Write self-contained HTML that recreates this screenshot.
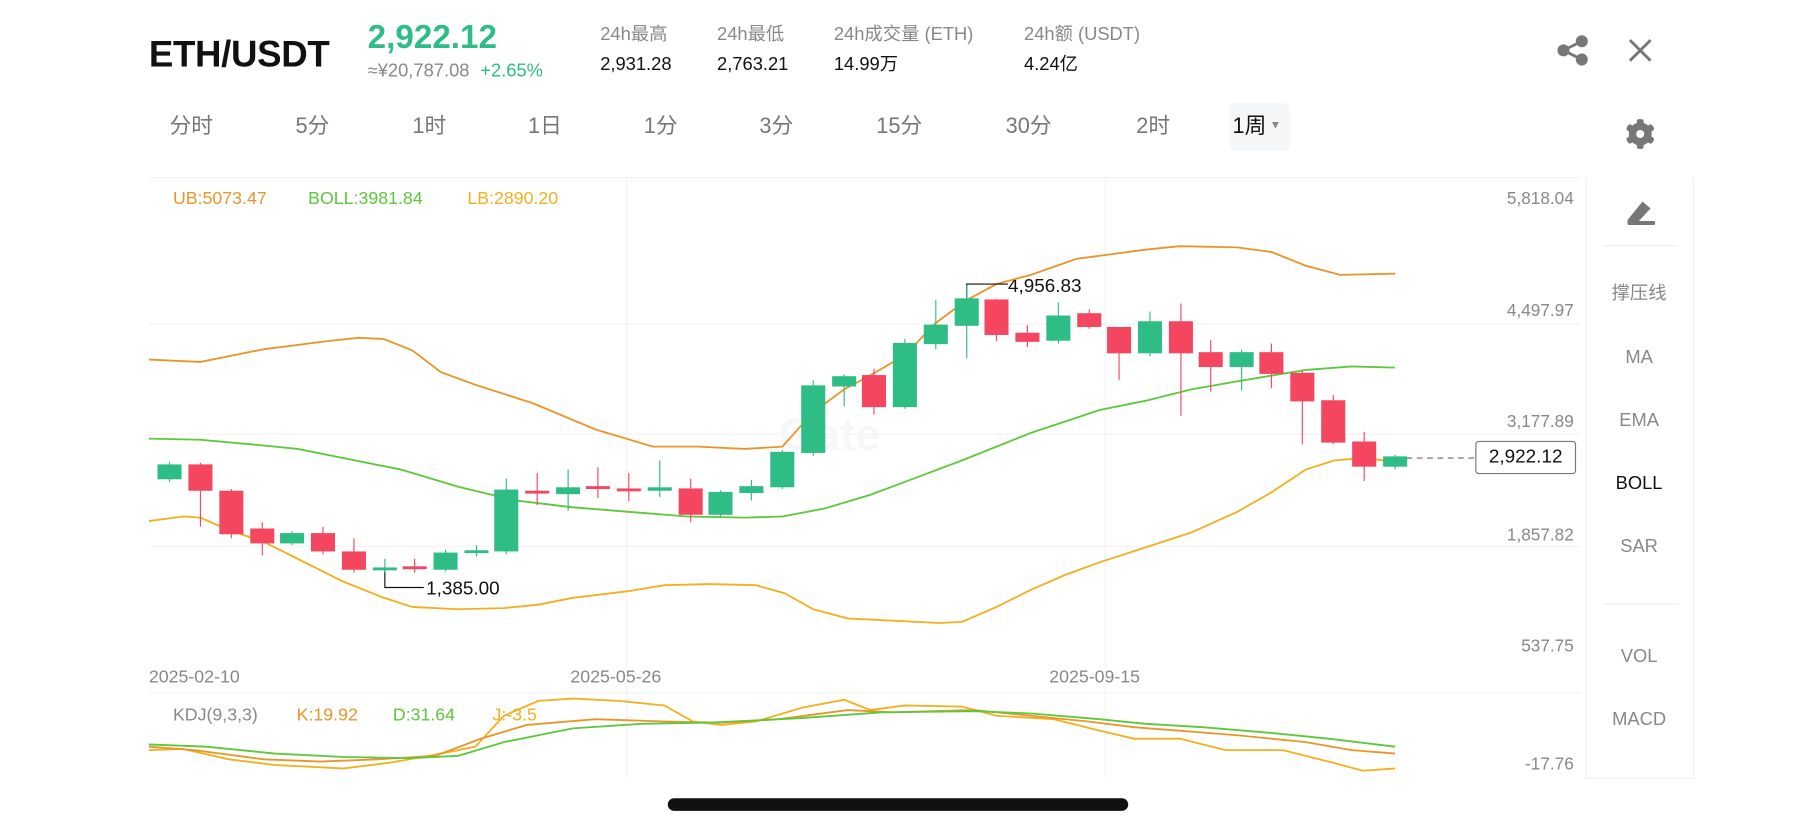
<!DOCTYPE html>
<html><head><meta charset="utf-8"><style>
html,body{margin:0;padding:0;background:#fff;width:1796px;height:828px;overflow:hidden}
#w{position:absolute;left:0;top:0;width:1568px;height:723px;transform:scale(1.14541,1.14523);transform-origin:0 0;font-family:"Liberation Sans","Noto Sans CJK SC",sans-serif}
.t{position:absolute;white-space:nowrap;line-height:1}
.g{color:#888}
.tab{position:absolute;top:101px;font-size:19px;color:#777;line-height:1;white-space:nowrap}
.r{position:absolute;left:1384px;width:94px;text-align:center;font-size:16px;color:#888;line-height:1}
.ax{position:absolute;right:194px;font-size:15px;color:#888;line-height:1}
.ab{position:absolute;white-space:nowrap;line-height:1;font-size:15.5px}
</style></head><body><div id="w">
<div class="t" style="left:130px;top:31px;font-size:32px;font-weight:bold;color:#111;letter-spacing:-0.3px">ETH/USDT</div>
<div class="t" style="left:321px;top:19px;font-size:29px;font-weight:bold;color:#2ebd85">2,922.12</div>
<div class="t g" style="left:321px;top:55px;font-size:16px">≈¥20,787.08 <span style="color:#2ebd85;margin-left:5px">+2.65%</span></div>
<div class="t g" style="left:524px;top:23px;font-size:16px">24h最高</div>
<div class="t" style="left:524px;top:49px;font-size:16px;color:#111">2,931.28</div>
<div class="t g" style="left:626px;top:23px;font-size:16px">24h最低</div>
<div class="t" style="left:626px;top:49px;font-size:16px;color:#111">2,763.21</div>
<div class="t g" style="left:728px;top:23px;font-size:16px">24h成交量 (ETH)</div>
<div class="t" style="left:728px;top:49px;font-size:16px;color:#111">14.99万</div>
<div class="t g" style="left:894px;top:23px;font-size:16px">24h额 (USDT)</div>
<div class="t" style="left:894px;top:49px;font-size:16px;color:#111">4.24亿</div>

<div class="tab" style="left:148px">分时</div>
<div class="tab" style="left:258px">5分</div>
<div class="tab" style="left:360px">1时</div>
<div class="tab" style="left:461px">1日</div>
<div class="tab" style="left:562px">1分</div>
<div class="tab" style="left:663px">3分</div>
<div class="tab" style="left:765px">15分</div>
<div class="tab" style="left:878px">30分</div>
<div class="tab" style="left:992px">2时</div>
<div style="position:absolute;left:1074px;top:90px;width:52px;height:42px;background:#f4f6f7;border-radius:4px"></div>
<div class="tab" style="left:1076px;color:#111">1周<span style="font-size:10px;color:#888;vertical-align:4px;margin-left:3px">▼</span></div>

<div class="ab" style="left:151px;top:166px;color:#e8962a">UB:5073.47</div>
<div class="ab" style="left:269px;top:166px;color:#5cc83a">BOLL:3981.84</div>
<div class="ab" style="left:408px;top:166px;color:#f2b01e">LB:2890.20</div>
<div class="ax" style="top:166px">5,818.04</div>
<div class="ax" style="top:264px">4,497.97</div>
<div class="ax" style="top:361px">3,177.89</div>
<div class="ax" style="top:460px">1,857.82</div>
<div class="ax" style="top:557px">537.75</div>
<div class="ax" style="top:660px">-17.76</div>
<div class="t g" style="left:130px;top:584px;font-size:15.5px">2025-02-10</div>
<div class="t g" style="left:498px;top:584px;font-size:15.5px">2025-05-26</div>
<div class="t g" style="left:916px;top:584px;font-size:15.5px">2025-09-15</div>
<div class="ab" style="left:151px;top:617px;color:#888">KDJ(9,3,3)</div>
<div class="ab" style="left:259px;top:617px;color:#e8962a">K:19.92</div>
<div class="ab" style="left:343px;top:617px;color:#5cc83a">D:31.64</div>
<div class="ab" style="left:430px;top:617px;color:#f2b01e">J:-3.5</div>
<div class="t" style="left:880px;top:242px;font-size:16.5px;color:#111">4,956.83</div>
<div class="t" style="left:372px;top:506px;font-size:16.5px;color:#111">1,385.00</div>

<div style="position:absolute;left:1384px;top:155px;width:93px;height:524px;border:1px solid #f0f0f0;border-top:none"></div>
<div class="r" style="top:249px">撑压线</div>
<div class="r" style="top:305px">MA</div>
<div class="r" style="top:360px">EMA</div>
<div class="r" style="top:415px;color:#111">BOLL</div>
<div class="r" style="top:470px">SAR</div>
<div class="r" style="top:566px">VOL</div>
<div class="r" style="top:621px">MACD</div>
<div style="position:absolute;left:1400px;top:214px;width:64px;height:1px;background:#eee"></div>
<div style="position:absolute;left:1400px;top:527px;width:66px;height:1px;background:#eee"></div>

<div style="position:absolute;left:1288px;top:385px;width:86px;height:27px;border:1px solid #777;border-radius:3px;background:#fff;font-size:16.5px;color:#111;text-align:center;line-height:27px">2,922.12</div>
<div style="position:absolute;left:583px;top:697px;width:402px;height:11px;background:#111;border-radius:6px"></div>

<svg width="1568" height="723" style="position:absolute;left:0;top:0" xmlns="http://www.w3.org/2000/svg">
<g stroke="#f2f2f2" stroke-width="1" fill="none">
<line x1="130" y1="155" x2="1380" y2="155"/><line x1="130" y1="283" x2="1380" y2="283"/><line x1="130" y1="379" x2="1380" y2="379"/><line x1="130" y1="477" x2="1380" y2="477"/><line x1="130" y1="605" x2="1380" y2="605"/>
<line x1="547" y1="155" x2="547" y2="680"/><line x1="965" y1="155" x2="965" y2="680"/>
</g>
<text x="680" y="393" font-family="Liberation Sans" font-weight="bold" font-size="40" fill="#f6f7f8">Gate</text>
<g fill="#777" stroke="#777" stroke-width="2.5"><circle cx="1381" cy="36" r="4"/><circle cx="1365" cy="44" r="4"/><circle cx="1381" cy="52" r="4"/><line x1="1381" y1="36" x2="1365" y2="44"/><line x1="1365" y1="44" x2="1381" y2="52"/></g>
<g stroke="#777" stroke-width="2.5"><line x1="1423" y1="35" x2="1441" y2="53"/><line x1="1441" y1="35" x2="1423" y2="53"/></g>
<g fill="#777"><circle cx="1432" cy="117" r="10"/><g><rect x="1429" y="104" width="6" height="26" rx="2"/><rect x="1429" y="104" width="6" height="26" rx="2" transform="rotate(60 1432 117)"/><rect x="1429" y="104" width="6" height="26" rx="2" transform="rotate(120 1432 117)"/></g></g>
<circle cx="1432" cy="117" r="3.5" fill="#fff"/>
<g fill="#777"><path d="M1421 192 L1434 176 L1441 182 L1428 196 L1421 196 Z"/><rect x="1421" y="193" width="24" height="3.5" rx="1"/></g>
<g fill="none" stroke-width="1.6">
<polyline stroke="#e8962a" points="130,314 175,316 230,305 285,298 313,295 335,296 360,306 385,325 415,336 465,352 520,375 570,390 610,390 650,392 683,390 710,360 737,340 763,326 790,310 817,282 844,262 870,248 900,240 940,226 970,222 1000,218 1030,215 1080,216 1110,220 1140,232 1170,240 1218,239"/>
<polyline stroke="#5cc83a" points="130,383 175,384 230,389 260,392 300,400 350,410 400,425 450,437 500,443 550,447 600,451 650,452 683,451 720,444 760,432 800,417 840,402 870,390 900,378 930,368 960,358 1000,350 1040,340 1080,333 1110,328 1140,323 1180,320 1218,321"/>
<polyline stroke="#f2b01e" points="130,455 160,451 175,452 200,463 230,473 260,488 300,508 335,522 360,530 400,532 440,531 470,528 500,522 550,516 580,511 620,510 660,511 685,518 710,532 740,540 780,542 820,544 840,543 870,530 900,515 930,502 960,491 1000,478 1040,465 1080,447 1110,430 1140,410 1165,402 1190,400 1218,403"/>
</g>
<line x1="1228" y1="400" x2="1288" y2="400" stroke="#666" stroke-dasharray="5,4"/>
<polyline points="844,260 844,248 880,248" fill="none" stroke="#111"/>
<polyline points="336,498 336,513 370,513" fill="none" stroke="#111"/>
<g>
<g stroke="#2ebd85" fill="#2ebd85">
<line x1="148" y1="403" x2="148" y2="421"/><rect x="138" y="406" width="20" height="12"/>
<line x1="255" y1="464" x2="255" y2="476"/><rect x="245" y="466" width="20" height="8"/>
<line x1="336" y1="488" x2="336" y2="500"/><rect x="326" y="496" width="20" height="1.5"/>
<line x1="389" y1="480" x2="389" y2="499"/><rect x="379" y="483" width="20" height="14"/>
<line x1="416" y1="476" x2="416" y2="486"/><rect x="406" y="481" width="20" height="1.5"/>
<line x1="442" y1="418" x2="442" y2="484"/><rect x="432" y="428" width="20" height="53"/>
<line x1="496" y1="410" x2="496" y2="446"/><rect x="486" y="426" width="20" height="5"/>
<line x1="576" y1="402" x2="576" y2="434"/><rect x="566" y="426" width="20" height="2"/>
<line x1="629" y1="428" x2="629" y2="451"/><rect x="619" y="430" width="20" height="19"/>
<line x1="656" y1="419" x2="656" y2="437"/><rect x="646" y="425" width="20" height="5"/>
<line x1="683" y1="393" x2="683" y2="427"/><rect x="673" y="395" width="20" height="30"/>
<line x1="710" y1="332" x2="710" y2="398"/><rect x="700" y="337" width="20" height="58"/>
<line x1="737" y1="327" x2="737" y2="355"/><rect x="727" y="329" width="20" height="8"/>
<line x1="790" y1="296" x2="790" y2="357"/><rect x="780" y="300" width="20" height="55"/>
<line x1="817" y1="262" x2="817" y2="305"/><rect x="807" y="284" width="20" height="16"/>
<line x1="844" y1="249" x2="844" y2="313"/><rect x="834" y="261" width="20" height="23"/>
<line x1="924" y1="264" x2="924" y2="300"/><rect x="914" y="276" width="20" height="21"/>
<line x1="1004" y1="272" x2="1004" y2="311"/><rect x="994" y="281" width="20" height="27"/>
<line x1="1084" y1="305" x2="1084" y2="341"/><rect x="1074" y="308" width="20" height="12"/>
<line x1="1218" y1="397" x2="1218" y2="410"/><rect x="1208" y="399" width="20" height="8"/>
</g>
<g stroke="#f4475f" fill="#f4475f">
<line x1="175" y1="404" x2="175" y2="460"/><rect x="165" y="406" width="20" height="22"/>
<line x1="202" y1="427" x2="202" y2="470"/><rect x="192" y="429" width="20" height="37"/>
<line x1="229" y1="456" x2="229" y2="485"/><rect x="219" y="462" width="20" height="12"/>
<line x1="282" y1="460" x2="282" y2="484"/><rect x="272" y="466" width="20" height="15"/>
<line x1="309" y1="470" x2="309" y2="500"/><rect x="299" y="482" width="20" height="15"/>
<line x1="362" y1="488" x2="362" y2="500"/><rect x="352" y="495" width="20" height="1.5"/>
<line x1="469" y1="413" x2="469" y2="441"/><rect x="459" y="429" width="20" height="1.5"/>
<line x1="522" y1="408" x2="522" y2="435"/><rect x="512" y="425" width="20" height="1.5"/>
<line x1="549" y1="413" x2="549" y2="438"/><rect x="539" y="427" width="20" height="1.5"/>
<line x1="603" y1="418" x2="603" y2="456"/><rect x="593" y="427" width="20" height="22"/>
<line x1="763" y1="322" x2="763" y2="362"/><rect x="753" y="328" width="20" height="27"/>
<line x1="870" y1="261" x2="870" y2="298"/><rect x="860" y="262" width="20" height="30"/>
<line x1="897" y1="284" x2="897" y2="303"/><rect x="887" y="291" width="20" height="7"/>
<line x1="951" y1="270" x2="951" y2="287"/><rect x="941" y="274" width="20" height="11"/>
<line x1="977" y1="286" x2="977" y2="332"/><rect x="967" y="286" width="20" height="22"/>
<line x1="1031" y1="265" x2="1031" y2="363"/><rect x="1021" y="281" width="20" height="27"/>
<line x1="1057" y1="297" x2="1057" y2="342"/><rect x="1047" y="308" width="20" height="12"/>
<line x1="1110" y1="300" x2="1110" y2="339"/><rect x="1100" y="308" width="20" height="18"/>
<line x1="1137" y1="324" x2="1137" y2="388"/><rect x="1127" y="326" width="20" height="24"/>
<line x1="1164" y1="345" x2="1164" y2="388"/><rect x="1154" y="350" width="20" height="36"/>
<line x1="1191" y1="377" x2="1191" y2="420"/><rect x="1181" y="386" width="20" height="21"/>
</g>
</g>
<g fill="none" stroke-width="1.6">
<polyline stroke="#f2b01e" points="130,655 160,654 200,663 240,668 300,671 340,666 380,659 415,652 440,625 470,612 500,610 540,612 580,616 605,630 630,633 660,630 700,618 737,611 760,620 790,616 840,617 870,625 920,628 960,638 990,645 1030,645 1070,655 1120,655 1160,665 1190,673 1218,671"/>
<polyline stroke="#e8962a" points="130,652 170,655 230,663 280,665 330,663 380,660 420,645 460,633 520,628 580,630 630,631 680,628 740,620 780,622 850,620 900,625 950,630 990,635 1030,638 1080,642 1140,648 1180,655 1218,658"/>
<polyline stroke="#5cc83a" points="130,650 180,652 240,658 300,661 360,662 400,660 440,648 500,636 560,632 620,631 700,627 770,622 850,621 900,623 960,628 1000,632 1050,635 1110,640 1160,645 1218,652"/>
</g>
</svg>
</div></body></html>
